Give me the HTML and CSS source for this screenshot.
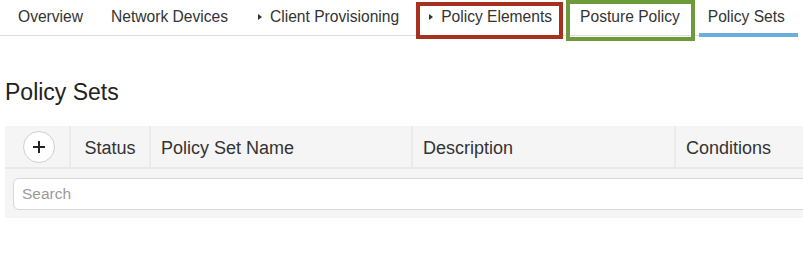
FILE: index.html
```html
<!DOCTYPE html>
<html lang="en">
  <head>
    <meta charset="UTF-8" />
    <title>Policy Sets</title>
    <link rel="stylesheet" href="styles.css">
  </head>
  <body>
    <div class="page">
      <nav class="tabs">
        <a class="tab">Overview</a>
        <a class="tab">Network Devices</a>
        <a class="tab"><span class="caret"></span>Client Provisioning</a>
        <a class="tab"><span class="caret"></span>Policy Elements</a>
        <a class="tab">Posture Policy</a>
        <a class="tab active">Policy Sets</a>
        <!-- highlight boxes drawn over the tabs -->
        <span class="mark mark-red"></span>
        <span class="mark mark-green"></span>
      </nav>

      <h1 class="title">Policy Sets</h1>

      <div class="policy-table">
        <div class="table-head">
          <div class="cell cell-add">
            <button class="add-button">
              <svg width="14" height="14" viewBox="0 0 14 14">
                <path d="M7 1v12M1 7h12" stroke="#222" stroke-width="2" />
              </svg>
            </button>
          </div>
          <div class="cell cell-status">Status</div>
          <div class="cell">Policy Set Name</div>
          <div class="cell">Description</div>
          <div class="cell last">Conditions</div>
        </div>
        <div class="search-row">
          <input class="search-input" type="text" placeholder="Search" />
        </div>
      </div>
    </div>
  </body>
</html>
```

FILE: styles.css
```css
html,
body {
  margin: 0;
  background: #ffffff;
}

body {
  font-family: "Liberation Sans", Arial, sans-serif;
  color: #333333;
  overflow: hidden;
}

.page {
  width: 803px;
  overflow: hidden;
}

.tabs {
  position: relative;
  display: flex;
  height: 35px;
  padding-left: 4px;
  border-bottom: 1px solid #dddddd;
  margin-right: 8px;
}

.tab {
  display: flex;
  align-items: center;
  padding: 0 14px 1px;
  font-size: 15.6px;
  color: #333333;
  white-space: nowrap;
  cursor: pointer;
}

.tab.active {
  padding: 0 13px 3px 9px;
  margin: 0 0 -2px 5px;
  box-shadow: inset 0 -4px 0 #6aaee0;
}

.caret {
  display: inline-block;
  width: 0;
  height: 0;
  border-left: 4px solid #333333;
  border-top: 3.5px solid transparent;
  border-bottom: 3.5px solid transparent;
  margin: 0 8px 0 2px;
}

.mark {
  position: absolute;
  box-sizing: border-box;
  border: 4px solid;
}

.mark-red {
  left: 416px;
  top: 2px;
  width: 147px;
  height: 37px;
  border-color: #a8301f;
}

.mark-green {
  left: 566px;
  top: 0;
  width: 129px;
  height: 41px;
  border-color: #6d9b3c;
}

.title {
  margin: 42px 0 20px 5px;
  font-size: 23px;
  line-height: 28px;
  font-weight: normal;
  color: #222222;
}

.policy-table {
  margin-left: 5px;
  width: 840px;
}

.table-head {
  display: grid;
  grid-template-columns: 66px 80px 262px 263px 1fr;
  height: 41px;
  background: #f5f5f5;
}

.cell {
  display: flex;
  align-items: center;
  padding: 4px 10px 0;
  font-size: 18px;
  color: #333333;
  border-right: 2px solid #ebebeb;
  white-space: nowrap;
}

.cell.last {
  border-right: none;
}

.cell-add {
  justify-content: center;
  padding: 0 0 0 4px;
}

.cell-status {
  justify-content: center;
  padding: 4px 0 0;
}

.add-button {
  display: flex;
  align-items: center;
  justify-content: center;
  width: 32px;
  height: 32px;
  padding: 0;
  border: 1px solid #cfcfcf;
  border-radius: 50%;
  background: #ffffff;
  cursor: pointer;
}

.search-row {
  border-top: 2px solid #e9e9e9;
  background: #f5f5f5;
  padding: 9px 0 8px 8px;
}

.search-input {
  display: block;
  box-sizing: border-box;
  width: 100%;
  height: 32px;
  padding: 0 8px;
  border: 1px solid #d8d8d8;
  border-radius: 6px;
  background: #ffffff;
  font-family: "Liberation Sans", Arial, sans-serif;
  font-size: 15.5px;
  color: #333333;
  outline: none;
}

.search-input::placeholder {
  color: #9a9a9a;
}
```
